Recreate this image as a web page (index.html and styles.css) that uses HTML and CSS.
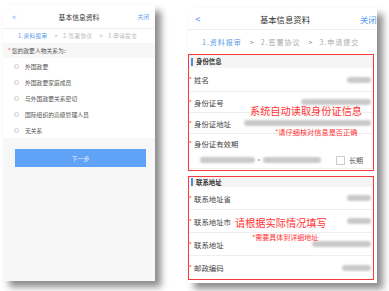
FILE: index.html
```html
<!DOCTYPE html>
<html lang="zh">
<head>
<meta charset="utf-8">
<link rel="stylesheet" href="styles.css">
</head>
<body>
<div class="stage">
  <div class="phone left">
    <div class="l-head">
      <span class="l-back">&lt;</span>
      <span class="l-title">基本信息资料</span>
      <span class="l-close">关闭</span>
    </div>
    <div class="l-steps">
      <span class="on">1.资料报审</span><span class="arr">&gt;</span><span>2.签署协议</span><span class="arr">&gt;</span><span>3.申请提交</span>
    </div>
    <div class="l-q"><span class="star">*</span> 您的政要人物关系为:</div>
    <div class="l-list">
      <div class="l-opt"><i class="radio"></i>外国政要</div>
      <div class="l-opt"><i class="radio"></i>外国政要家庭成员</div>
      <div class="l-opt"><i class="radio"></i>与外国政要关系密切</div>
      <div class="l-opt"><i class="radio"></i>国际组织的高级管理人员</div>
      <div class="l-opt"><i class="radio"></i>无关系</div>
    </div>
    <div class="l-btn">下一步</div>
  </div>

  <div class="phone right">
    <div class="r-head">
      <span class="r-back">&lt;</span>
      <span class="r-title">基本信息资料</span>
      <span class="r-close">关闭</span>
    </div>
    <div class="r-steps">
      <span class="on">1.资料报审</span><span class="arr">&gt;</span><span>2.签署协议</span><span class="arr">&gt;</span><span>3.申请提交</span>
    </div>

    <div class="box box1">
      <div class="sec"><i class="bar"></i>身份信息</div>
      <div class="row r-name"><span class="lab"><b>*</b>姓名</span><i class="blob w24"></i></div>
      <div class="row r-id"><span class="lab"><b>*</b>身份证号</span><i class="blob w70"></i></div>
      <div class="row r-addr"><span class="lab"><b>*</b>身份证地址</span><i class="blob w127"></i></div>
      <div class="row r-valid nosep"><span class="lab"><b>*</b>身份证有效期</span></div>
      <div class="row r-date">
        <i class="blob w55"></i><i class="dot"></i><i class="blob w58"></i>
        <span class="check"><i class="cbox"></i>长期</span>
      </div>
      <div class="note big n1">系统自动读取身份证信息</div>
      <div class="note small n2">*请仔细核对信息是否正确</div>
    </div>

    <div class="box box2">
      <div class="sec sec2"><i class="bar"></i>联系地址</div>
      <div class="row r2"><span class="lab"><b>*</b>联系地址省</span><i class="blob w24"></i></div>
      <div class="row r2"><span class="lab"><b>*</b>联系地址市</span><i class="blob w24"></i></div>
      <div class="row r2"><span class="lab"><b>*</b>联系地址</span><i class="blob w59"></i></div>
      <div class="row r2 nosep"><span class="lab"><b>*</b>邮政编码</span><i class="blob w29"></i></div>
      <div class="note big n3">请根据实际情况填写</div>
      <div class="note small n4">*需要具体到详细地址</div>
    </div>
  </div>
</div>
</body>
</html>
```

FILE: styles.css
```css
* { box-sizing: border-box; margin: 0; padding: 0; }
html, body { width: 389px; height: 291px; overflow: hidden; background: #ffffff; }
body { font-family: "Noto Sans CJK SC", "Noto Sans", sans-serif; color: #333; }

.stage { display: flex; align-items: flex-start; padding-left: 3px; gap: 33px; }

.phone { overflow: hidden; position: relative; }

/* ---------- left phone ---------- */
.left {
  width: 152px; height: 276px; margin-top: 5px;
  background: #f7f7f7;
  box-shadow: 6px 6px 7px rgba(0,0,0,0.45);
  display: flex; flex-direction: column;
}
.l-head {
  height: 24px; background: #fff; border-bottom: 1px solid #eee;
  display: flex; align-items: center; justify-content: space-between;
  padding: 0 6px 0 9px; position: relative;
}
.l-back { color: #6aa3e8; font-size: 8px; }
.l-title { position: absolute; left: 0; right: 0; text-align: center; font-size: 6.8px; color: #333; }
.l-close { color: #6aa3e8; font-size: 5.8px; }
.l-steps {
  height: 14px; background: #fff; display: flex; align-items: center;
  padding-left: 15px; font-size: 5.6px; color: #b5b5b5; letter-spacing: 0.4px;
}
.l-steps .on { color: #5b9be8; }
.l-steps .arr { margin: 0 5px 0 7px; }
.l-q {
  height: 15px; display: flex; align-items: center; padding-left: 5px;
  font-size: 5.8px; color: #555; background: #f7f7f7;
}
.star { color: #f33; margin-right: 1px; }
.l-list { background: #fff; }
.l-opt {
  height: 16px; display: flex; align-items: center; padding-left: 11px;
  font-size: 5.8px; color: #555;
}
.radio {
  width: 5px; height: 5px; border-radius: 50%; border: 0.6px solid #ccc;
  margin-right: 6px; display: inline-block;
}
.l-btn {
  margin: 11px 9px 0 12px; height: 18px; background: #5fa2f6;
  color: #e6f0ff; font-size: 6px; display: flex; align-items: center; justify-content: center;
}

/* ---------- right phone ---------- */
.right {
  width: 189px; height: 275px; margin-top: 8px;
  background: #fff;
  box-shadow: 6px 6px 7px rgba(0,0,0,0.45);
  display: flex; flex-direction: column;
}
.r-head {
  height: 22px; display: flex; align-items: center; position: relative;
  border-bottom: 1px solid #f0f0f0; padding-left: 7px;
}
.r-back { color: #5b9be8; font-size: 10px; }
.r-title { position: absolute; left: 5px; right: 0; text-align: center; font-size: 8.4px; color: #333; }
.r-close { position: absolute; left: 172px; color: #5b9be8; font-size: 8.4px; white-space: nowrap; }
.r-steps {
  height: 24px; display: flex; align-items: center; padding-left: 14px;
  font-size: 7px; letter-spacing: 1px; color: #aaa;
}
.r-steps .on { color: #5b9be8; }
.r-steps .arr { margin: 0 6px 0 8px; color: #888; }

.box {
  width: 186px; border: 1.5px solid #f43c3c; position: relative; display: flex; flex-direction: column;
}
.box1 { height: 117px; }
.box2 { height: 104px; margin-top: 5px; }
.sec {
  height: 13px; background: #f5f5f5; display: flex; align-items: center;
  font-size: 6.4px; color: #333; font-weight: bold; padding-left: 2px;
}
.sec2 { height: 10px; }
.bar { width: 2px; height: 8px; background: #4a90e2; margin-right: 3px; display: inline-block; }
.row {
  display: flex; align-items: center; justify-content: space-between;
  border-bottom: 0.6px solid #eee; padding-right: 2px;
}
.row.nosep { border-bottom: none; }
.r-name { height: 24px; }
.r-id { height: 21px; }
.r-addr { height: 21px; }
.r-valid { height: 18px; }
.r-date { height: 17px; justify-content: flex-start; padding-left: 11px; }
.r2 { height: 23px; }
.r2:last-of-type { height: 22px; }
.lab { font-size: 7.4px; color: #444; display: flex; align-items: center; }
.lab b { color: #f33; font-weight: normal; font-size: 6px; width: 5px; padding-left: 0; }
.blob {
  display: inline-block; height: 6px; border-radius: 3px; background: #c9c9c9;
  filter: blur(1.3px);
}
.w24 { width: 24px; } .w70 { width: 70px; } .w127 { width: 127px; }
.w55 { width: 55px; } .w58 { width: 58px; } .w59 { width: 59px; } .w29 { width: 29px; }
.dot { width: 2px; height: 2px; background: #bbb; margin: 0 3px; display: inline-block; }
.check { margin-left: auto; display: flex; align-items: center; font-size: 7px; color: #555; margin-right: 8px; }
.cbox { width: 9px; height: 9px; border: 0.8px solid #ccc; margin-right: 4px; display: inline-block; }

.note { position: absolute; color: #ff3333; white-space: nowrap; line-height: 1; }
.big { font-size: 10.2px; }
.small { font-size: 7.2px; }
.n1 { left: 61px; top: 51px; }
.n2 { left: 86px; top: 74px; }
.n3 { left: 46px; top: 41px; }
.n4 { left: 63px; top: 57px; font-size: 7px; }
```
